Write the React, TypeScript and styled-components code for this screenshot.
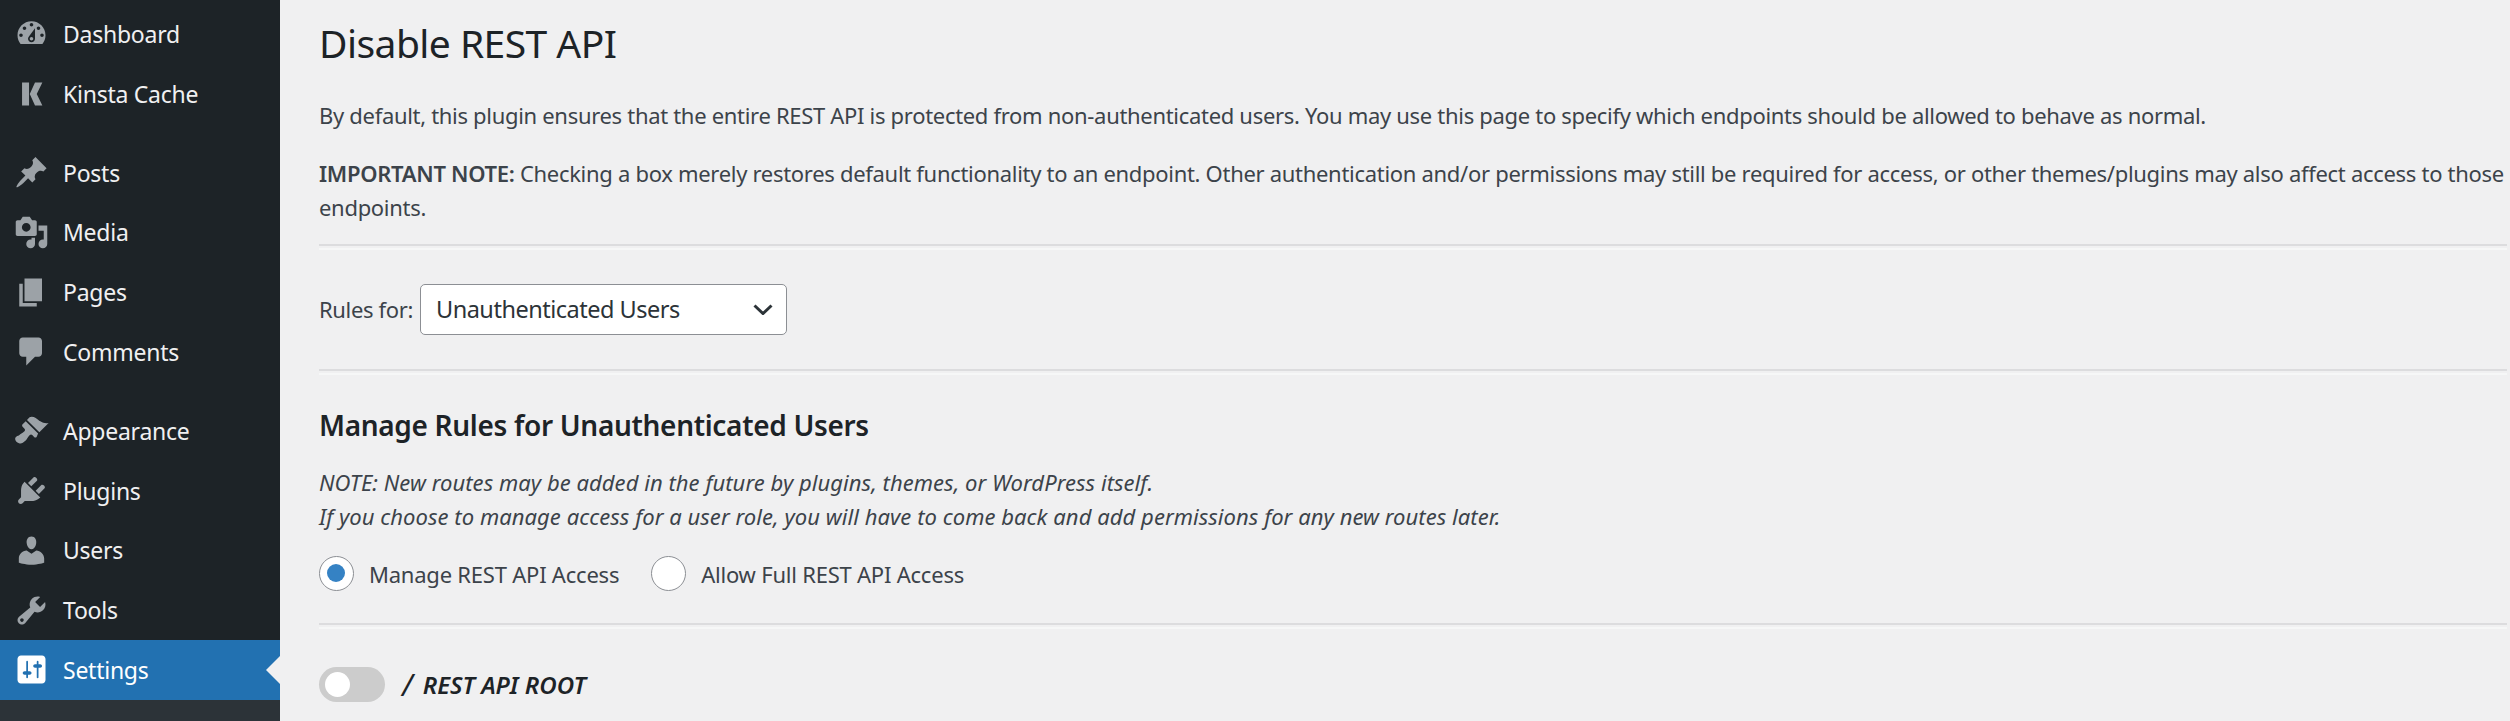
import React from 'react';
import styled, { createGlobalStyle } from 'styled-components';

const GlobalStyle = createGlobalStyle`
  html, body {
    margin: 0;
    padding: 0;
    height: 721px;
    overflow: hidden;
    background: #f0f0f1;
    font-family: "Noto Sans", "Open Sans", sans-serif;
  }
`;

const ICONS: Record<string, string> = {
  dashboard:
    'M3.76 16h12.48c1.1-1.37 1.76-3.11 1.76-5 0-4.42-3.58-8-8-8s-8 3.58-8 8c0 1.89.66 3.63 1.76 5zM10 4c.55 0 1 .45 1 1s-.45 1-1 1-1-.45-1-1 .45-1 1-1zM6 6c.55 0 1 .45 1 1s-.45 1-1 1-1-.45-1-1 .45-1 1-1zm8 0c.55 0 1 .45 1 1s-.45 1-1 1-1-.45-1-1 .45-1 1-1zm-5.37 5.55L12 7v6c0 1.1-.9 2-2 2s-2-.9-2-2c0-.57.24-1.08.63-1.45zM4 10c.55 0 1 .45 1 1s-.45 1-1 1-1-.45-1-1 .45-1 1-1zm12 0c.55 0 1 .45 1 1s-.45 1-1 1-1-.45-1-1 .45-1 1-1zm-5 3c0-.55-.45-1-1-1s-1 .45-1 1 .45 1 1 1 1-.45 1-1z',
  kinsta: 'M4.6 3.7h4v13.2h-4zM9 10.3l3-6.6h4.200L13 10.3l3.200 6.6H12z',
  posts:
    'M10.44 3.02l1.82-1.82 6.36 6.35-1.83 1.82c-1.05-.68-2.48-.57-3.41.36l-.75.75c-.92.93-1.04 2.35-.35 3.41l-1.83 1.82-2.41-2.41-2.8 2.79c-.42.42-3.38 2.71-3.8 2.29s1.86-3.39 2.28-3.81l2.79-2.79L4.1 9.36l1.83-1.82c1.05.69 2.48.57 3.4-.36l.75-.75c.93-.92 1.05-2.35.36-3.41z',
  media:
    'M13 11V4c0-.55-.45-1-1-1h-1.67L9 1H5L3.67 3H2c-.55 0-1 .45-1 1v7c0 .55.45 1 1 1h10c.55 0 1-.45 1-1zM7 4.5c1.38 0 2.5 1.12 2.5 2.5S8.38 9.5 7 9.5 4.5 8.38 4.5 7 5.62 4.5 7 4.5zM14 6h5v10.5c0 1.38-1.12 2.5-2.5 2.5S14 17.88 14 16.5s1.12-2.5 2.5-2.5c.17 0 .34.02.5.05V9h-3V6zm-4 8.05V13h2v3.5c0 1.38-1.12 2.5-2.5 2.5S7 17.88 7 16.5 8.12 14 9.5 14c.17 0 .34.02.5.05z',
  pages: 'M6 15V2h10v13H6zm-1 1h8v2H3V5h2v11z',
  comments:
    'M5 2h9c1.1 0 2 .9 2 2v7c0 1.1-.9 2-2 2h-2l-5 5v-5H5c-1.1 0-2-.9-2-2V4c0-1.1.9-2 2-2z',
  appearance:
    'M14.48 11.06L7.41 3.99l1.5-1.5c.5-.56 2.3-.47 3.51.32 1.21.8 1.43 1.28 2.91 2.1 1.18.64 2.45 1.26 4.45.85zm-.71.71L6.7 4.7 4.93 6.47c-.39.39-.39 1.02 0 1.41l1.06 1.06c.39.39.39 1.03 0 1.42-.6.6-1.43 1.11-2.21 1.69-.35.26-.7.53-1.01.84C1.43 13.23.4 14.1.7 15.1c.29 1 .8 1.65 2.15 2.13 1.34.47 2.31-.23 3.66-1.38.33-.31.57-.67.83-1.01.58-.78 1.09-1.61 1.69-2.21.39-.39 1.02-.39 1.41 0l1.06 1.06c.39.39 1.02.39 1.41 0z',
  plugins:
    'M13.11 4.36L9.87 7.6 8 5.73l3.24-3.24c.35-.34 1.05-.2 1.56.32.52.51.66 1.21.31 1.55zm-8 1.77l.91-1.12 9.01 9.01-1.19.84c-.71.71-2.63 1.16-3.82 1.16H6.14L4.9 17.26c-.59.59-1.54.59-2.12 0-.59-.58-.59-1.53 0-2.12l1.24-1.24v-3.88c0-1.13.4-3.19 1.09-3.89zm7.26 3.97l3.24-3.24c.34-.35 1.04-.21 1.55.31.52.51.66 1.21.31 1.55l-3.24 3.25z',
  users:
    'M10 9.25c-2.27 0-2.73-3.44-2.73-3.44C7 4.02 7.82 2 9.97 2c2.16 0 2.98 2.02 2.71 3.81 0 0-.41 3.44-2.68 3.44zm0 2.57L12.72 10c2.39 0 4.52 2.33 4.52 4.53v2.49s-3.65 1.13-7.24 1.13c-3.65 0-7.24-1.13-7.24-1.13v-2.49c0-2.25 1.94-4.48 4.47-4.48z',
  tools:
    'M16.68 9.77c-1.34 1.34-3.3 1.67-4.95.99l-5.41 6.52c-.99.99-2.59.99-3.58 0s-.99-2.59 0-3.57l6.52-5.42c-.68-1.65-.35-3.61.99-4.95 1.28-1.28 3.12-1.62 4.72-1.06l-2.89 2.89 2.82 2.82 2.86-2.87c.53 1.58.18 3.39-1.08 4.65zM3.81 16.21c.4.39 1.04.39 1.43 0 .4-.4.4-1.04 0-1.43-.39-.4-1.03-.4-1.43 0-.39.39-.39 1.03 0 1.43z',
  settings:
    'M18 16V4c0-1.1-.9-2-2-2H4c-1.1 0-2 .9-2 2v12c0 1.1.9 2 2 2h12c1.1 0 2-.9 2-2zM8 11h1c.55 0 1 .45 1 1s-.45 1-1 1H8v1.5c0 .28-.22.5-.5.5s-.5-.22-.5-.5V13H6c-.55 0-1-.45-1-1s.45-1 1-1h1V5.5c0-.28.22-.5.5-.5s.5.22.5.5V11zm5-2h-1c-.55 0-1-.45-1-1s.45-1 1-1h1V5.5c0-.28.22-.5.5-.5s.5.22.5.5V7h1c.55 0 1 .45 1 1s-.45 1-1 1h-1v5.5c0 .28-.22.5-.5.5s-.5-.22-.5-.5V9z',
};

type MenuEntry = { label: string; icon: string; active?: boolean };

const MENU_GROUPS: MenuEntry[][] = [
  [
    { label: 'Dashboard', icon: 'dashboard' },
    { label: 'Kinsta Cache', icon: 'kinsta' },
  ],
  [
    { label: 'Posts', icon: 'posts' },
    { label: 'Media', icon: 'media' },
    { label: 'Pages', icon: 'pages' },
    { label: 'Comments', icon: 'comments' },
  ],
  [
    { label: 'Appearance', icon: 'appearance' },
    { label: 'Plugins', icon: 'plugins' },
    { label: 'Users', icon: 'users' },
    { label: 'Tools', icon: 'tools' },
    { label: 'Settings', icon: 'settings', active: true },
  ],
];

const App: React.FC = () => (
  <Page>
    <GlobalStyle />
    <Sidebar>
      <MenuList>
        {MENU_GROUPS.map((group) => (
          <MenuGroup key={group[0].label}>
            {group.map((item) => (
              <MenuItem key={item.label} $active={item.active}>
                <MenuIcon viewBox="0 0 20 20" $active={item.active}>
                  <path d={ICONS[item.icon]} fillRule="evenodd" />
                </MenuIcon>
                {item.label}
              </MenuItem>
            ))}
          </MenuGroup>
        ))}
      </MenuList>
      <Submenu />
    </Sidebar>
    <Main>
      <Title>Disable REST API</Title>
      <Intro>
        By default, this plugin ensures that the entire REST API is protected from non-authenticated users. You may use
        this page to specify which endpoints should be allowed to behave as normal.
      </Intro>
      <Important>
        <strong>IMPORTANT NOTE:</strong> Checking a box merely restores default functionality to an endpoint. Other
        authentication and/or permissions may still be required for access, or other themes/plugins may also affect
        access to those endpoints.
      </Important>
      <Divider />
      <RulesRow>
        <RulesLabel>Rules for:</RulesLabel>
        <SelectBox>
          Unauthenticated Users
          <svg width="20" height="11" viewBox="0 0 20 11" fill="none">
            <path d="M1.5 1.5 10 9.5l8.500-8" stroke="#2c3338" strokeWidth="3" />
          </svg>
        </SelectBox>
      </RulesRow>
      <Divider />
      <Heading>Manage Rules for Unauthenticated Users</Heading>
      <Note>
        NOTE: New routes may be added in the future by plugins, themes, or WordPress itself.
        <br />
        If you choose to manage access for a user role, you will have to come back and add permissions for any new
        routes later.
      </Note>
      <RadioRow>
        <RadioLabel>
          <RadioDot $checked />
          Manage REST API Access
        </RadioLabel>
        <RadioLabel>
          <RadioDot />
          Allow Full REST API Access
        </RadioLabel>
      </RadioRow>
      <Divider />
      <RouteRow>
        <Toggle />
        <RouteSlash>/</RouteSlash>
        <RouteName>REST API ROOT</RouteName>
      </RouteRow>
    </Main>
  </Page>
);

export default App;

const Page = styled.div`
  display: flex;
  width: 2510px;
  height: 721px;
  overflow: hidden;
`;

const Sidebar = styled.nav`
  display: flex;
  flex-direction: column;
  flex: 0 0 280px;
  background: #1d2327;
`;

const MenuList = styled.div`
  display: flex;
  flex-direction: column;
  gap: 19.5px;
  padding-top: 4px;
`;

const MenuGroup = styled.div`
  display: flex;
  flex-direction: column;
`;

const MenuItem = styled.div<{ $active?: boolean }>`
  position: relative;
  display: flex;
  align-items: center;
  gap: 14px;
  height: 59.7px;
  padding-left: 14px;
  font-size: 23px;
  letter-spacing: -0.25px;
  color: ${(p) => (p.$active ? '#fff' : '#f0f0f1')};
  background: ${(p) => (p.$active ? '#2271b1' : 'transparent')};

  ${(p) =>
    p.$active &&
    `
    &::after {
      content: '';
      position: absolute;
      right: 0;
      top: 16px;
      border: 14px solid transparent;
      border-left-width: 0;
      border-right-color: #f0f0f1;
    }
  `}
`;

const MenuIcon = styled.svg<{ $active?: boolean }>`
  width: 35px;
  height: 35px;
  flex: none;
  fill: ${(p) => (p.$active ? '#fff' : '#9ca2a7')};
`;

const Submenu = styled.div`
  flex: 1;
  background: #2c3338;
`;

const Main = styled.main`
  flex: 1;
  min-width: 0;
  padding: 18px 3px 0 39px;
  color: #3c434a;
  font-size: 22px;
  line-height: 34px;
`;

const Title = styled.h1`
  margin: 0 0 29.5px;
  font-size: 39px;
  font-weight: 400;
  line-height: 50px;
  letter-spacing: -0.55px;
  color: #1d2327;
`;

const Intro = styled.p`
  margin: 0 0 24px;
  letter-spacing: -0.31px;
`;

const Important = styled.p`
  margin: 0 0 20px;
  letter-spacing: -0.3px;
  strong {
    font-weight: 600;
  }
`;

const Divider = styled.hr`
  margin: 0;
  height: 2px;
  border: 0;
  border-top: 2px solid #dcdcde;
  border-bottom: 2px solid #f6f7f7;
`;

const RulesRow = styled.div`
  display: flex;
  align-items: center;
  gap: 7px;
  padding: 34px 0 34px;
`;

const RulesLabel = styled.label`
  letter-spacing: -0.35px;
`;

const SelectBox = styled.div`
  display: flex;
  align-items: center;
  justify-content: space-between;
  box-sizing: border-box;
  width: 367px;
  height: 51px;
  padding: 0 13px 0 15px;
  border: 1.75px solid #8c8f94;
  border-radius: 5px;
  background: #fff;
  color: #2c3338;
  font-size: 23.5px;
  letter-spacing: -0.5px;
`;

const Heading = styled.h2`
  margin: 31.5px 0 21px;
  font-size: 28px;
  font-weight: 600;
  line-height: 38px;
  letter-spacing: -0.32px;
  color: #1d2327;
`;

const Note = styled.p`
  margin: 0 0 23px;
  font-style: italic;
  letter-spacing: 0.05px;
`;

const RadioRow = styled.div`
  display: flex;
  gap: 32px;
  padding-bottom: 32px;
`;

const RadioLabel = styled.label`
  display: flex;
  align-items: center;
  gap: 15px;
  height: 35px;
  letter-spacing: -0.22px;
`;

const RadioDot = styled.span<{ $checked?: boolean }>`
  position: relative;
  box-sizing: border-box;
  width: 35px;
  height: 35px;
  flex: none;
  border: 1.75px solid #8c8f94;
  border-radius: 50%;
  background: #fff;

  ${(p) =>
    p.$checked &&
    `
    &::before {
      content: '';
      position: absolute;
      left: 6.75px;
      top: 6.75px;
      width: 18px;
      height: 18px;
      border-radius: 50%;
      background: #3582c4;
    }
  `}
`;

const RouteRow = styled.div`
  display: flex;
  align-items: center;
  height: 35px;
  margin-top: 38px;
`;

const Toggle = styled.span`
  position: relative;
  width: 66px;
  height: 35px;
  border-radius: 18px;
  background: #ccc;

  &::before {
    content: '';
    position: absolute;
    left: 6px;
    top: 5px;
    width: 25px;
    height: 25px;
    border-radius: 50%;
    background: #fff;
  }
`;

const RouteSlash = styled.span`
  margin-left: 17px;
  font-size: 30px;
  font-style: italic;
  color: #1d2327;
`;

const RouteName = styled.span`
  margin-left: 10px;
  font-size: 24px;
  font-style: italic;
  font-weight: 600;
  letter-spacing: 0;
  color: #1d2327;
`;
